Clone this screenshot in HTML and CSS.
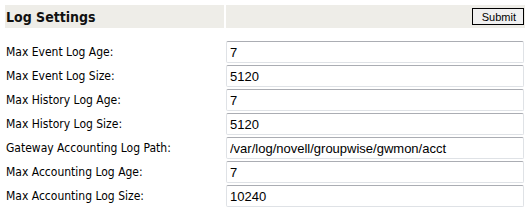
FILE: index.html
```html
<!DOCTYPE html>
<html lang="en">
<head>
    <meta charset="UTF-8">
    <title>Log Settings</title>
    <link rel="stylesheet" href="styles.css">
</head>
<body>
    <form class="settings">
        <div class="head head-title">Log Settings</div>
        <div class="head head-action">
            <button type="button" class="submit">Submit</button>
        </div>

        <label class="field-label" for="evAge">Max Event Log Age:</label>
        <input class="field" id="evAge" type="text" value="7">

        <label class="field-label" for="evSize">Max Event Log Size:</label>
        <input class="field" id="evSize" type="text" value="5120">

        <label class="field-label" for="hiAge">Max History Log Age:</label>
        <input class="field" id="hiAge" type="text" value="7">

        <label class="field-label" for="hiSize">Max History Log Size:</label>
        <input class="field" id="hiSize" type="text" value="5120">

        <label class="field-label" for="acPath">Gateway Accounting Log Path:</label>
        <input class="field" id="acPath" type="text" value="/var/log/novell/groupwise/gwmon/acct">

        <label class="field-label" for="acAge">Max Accounting Log Age:</label>
        <input class="field" id="acAge" type="text" value="7">

        <label class="field-label" for="acSize">Max Accounting Log Size:</label>
        <input class="field" id="acSize" type="text" value="10240">
    </form>
</body>
</html>
```

FILE: styles.css
```css
body {
    margin: 0;
    padding: 5px 0 0 5px;
    background: #fff;
    font-family: "DejaVu Sans Condensed", "DejaVu Sans", sans-serif;
    color: #000;
}
.settings {
    display: grid;
    grid-template-columns: 219px 299px;
    column-gap: 2px;
    row-gap: 2px;
    align-items: center;
}
.head {
    background: #eeede8;
    height: 23px;
    margin-bottom: 11px;
}
.head-title {
    padding-left: 1px;
    font-size: 14px;
    font-weight: bold;
    line-height: 24px;
    color: #111;
}
.head-action {
    display: flex;
    justify-content: flex-end;
    align-items: center;
}
.submit {
    font-family: "Liberation Sans", Arial, sans-serif;
    font-size: 11px;
    height: 17px;
    padding: 0 7px 0 9px;
    margin-right: 1px;
    background: #f0f0f0;
    border: 1px solid #000;
    border-radius: 0;
    color: #000;
}
.field-label {
    padding-left: 1px;
    font-size: 12px;
}
.field {
    box-sizing: border-box;
    width: 298px;
    height: 22px;
    margin: 0;
    padding: 0 3px;
    font-family: "Liberation Sans", Arial, sans-serif;
    font-size: 13px;
    color: #000;
    border: 1px solid #dfe2e6;
    border-top-color: #abadb3;
    border-radius: 2px;
}
```
